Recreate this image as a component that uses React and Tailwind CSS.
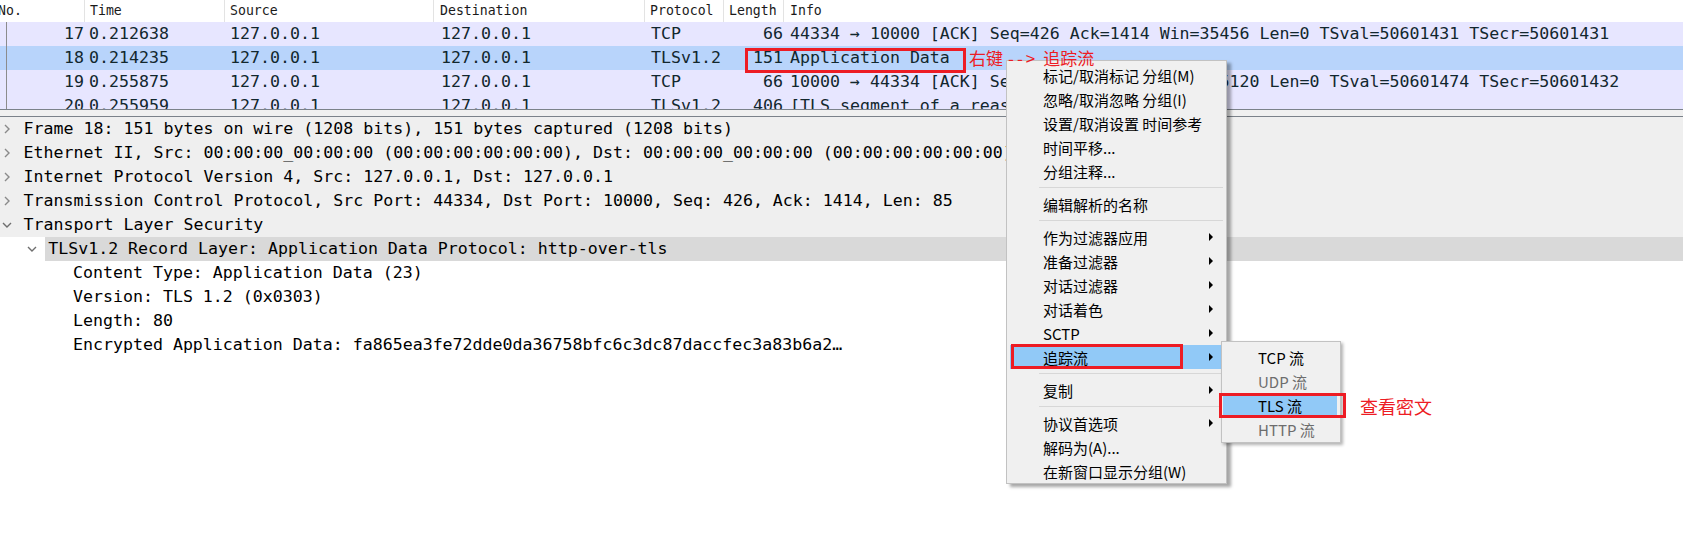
import React from "react";

const packets = [
  {
    no: 17,
    time: "0.212638",
    src: "127.0.0.1",
    dst: "127.0.0.1",
    proto: "TCP",
    len: 66,
    info: "44334 → 10000 [ACK] Seq=426 Ack=1414 Win=35456 Len=0 TSval=50601431 TSecr=50601431",
  },
  {
    no: 18,
    time: "0.214235",
    src: "127.0.0.1",
    dst: "127.0.0.1",
    proto: "TLSv1.2",
    len: 151,
    info: "Application Data",
    selected: true,
  },
  {
    no: 19,
    time: "0.255875",
    src: "127.0.0.1",
    dst: "127.0.0.1",
    proto: "TCP",
    len: 66,
    info: "10000 → 44334 [ACK] Seq=1414 Ack=511 Win=175120 Len=0 TSval=50601474 TSecr=50601432",
  },
  {
    no: 20,
    time: "0.255959",
    src: "127.0.0.1",
    dst: "127.0.0.1",
    proto: "TLSv1.2",
    len: 406,
    info: "[TLS segment of a reassembled PDU]",
  },
];

const tree = [
  { lvl: 0, icon: "right", gray: true, text: "Frame 18: 151 bytes on wire (1208 bits), 151 bytes captured (1208 bits)" },
  { lvl: 0, icon: "right", gray: true, text: "Ethernet II, Src: 00:00:00_00:00:00 (00:00:00:00:00:00), Dst: 00:00:00_00:00:00 (00:00:00:00:00:00)" },
  { lvl: 0, icon: "right", gray: true, text: "Internet Protocol Version 4, Src: 127.0.0.1, Dst: 127.0.0.1" },
  { lvl: 0, icon: "right", gray: true, text: "Transmission Control Protocol, Src Port: 44334, Dst Port: 10000, Seq: 426, Ack: 1414, Len: 85" },
  { lvl: 0, icon: "down", gray: true, text: "Transport Layer Security" },
  { lvl: 1, icon: "down", selected: true, text: "TLSv1.2 Record Layer: Application Data Protocol: http-over-tls" },
  { lvl: 2, text: "Content Type: Application Data (23)" },
  { lvl: 2, text: "Version: TLS 1.2 (0x0303)" },
  { lvl: 2, text: "Length: 80" },
  { lvl: 2, text: "Encrypted Application Data: fa865ea3fe72dde0da36758bfc6c3dc87daccfec3a83b6a2…" },
];

const indent = ["w-0", "w-[24.6px]", "w-[49.4px]"];

const menu = [
  { label: "标记/取消标记 分组(M)" },
  { label: "忽略/取消忽略 分组(I)" },
  { label: "设置/取消设置 时间参考" },
  { label: "时间平移..." },
  { label: "分组注释..." },
  "sep",
  { label: "编辑解析的名称" },
  "sep",
  { label: "作为过滤器应用", sub: true },
  { label: "准备过滤器", sub: true },
  { label: "对话过滤器", sub: true },
  { label: "对话着色", sub: true },
  { label: "SCTP", sub: true },
  { label: "追踪流", sub: true, active: true },
  "sep",
  { label: "复制", sub: true },
  "sep",
  { label: "协议首选项", sub: true },
  { label: "解码为(A)..." },
  { label: "在新窗口显示分组(W)" },
];

const followMenu = [
  { label: "TCP 流" },
  { label: "UDP 流", disabled: true },
  { label: "TLS 流", active: true },
  { label: "HTTP 流", disabled: true },
];

const Chevron = ({ dir }) =>
  dir === "right" ? (
    <svg width="8" height="12" viewBox="0 0 8 12" className="ml-[3px]">
      <polyline points="2,2 6,6 2,10" fill="none" stroke="#8a8a8a" strokeWidth="1.4" />
    </svg>
  ) : (
    <svg width="12" height="8" viewBox="0 0 12 8" className="ml-[1px]">
      <polyline points="2,2 6,6 10,2" fill="none" stroke="#6e6e6e" strokeWidth="1.4" />
    </svg>
  );

const SubArrow = () => (
  <svg width="4" height="8" viewBox="0 0 4 8">
    <polygon points="0,0 4,4 0,8" fill="#000" />
  </svg>
);

export default function App() {
  return (
    <div className="relative w-[1683px] h-[538px] overflow-hidden bg-white text-black">
      {/* packet list */}
      <div className="relative h-[109px] overflow-hidden font-['DejaVu_Sans_Mono',monospace]">
        <div className="flex h-[22px] items-center bg-white text-[13.2px] text-[#1a1a1a] whitespace-nowrap">
          <div className="w-[87px] h-full flex items-center border-r border-[#e3e3e3] -ml-[2px] pl-0">No.</div>
          <div className="w-[140px] h-full flex items-center border-r border-[#e3e3e3] pl-[5px]">Time</div>
          <div className="w-[209px] h-full flex items-center border-r border-[#e3e3e3] pl-[5px]">Source</div>
          <div className="w-[211px] h-full flex items-center border-r border-[#e3e3e3] pl-[6px]">Destination</div>
          <div className="w-[79px] h-full flex items-center border-r border-[#e3e3e3] pl-[5px]">Protocol</div>
          <div className="w-[60px] h-full flex items-center border-r border-[#e3e3e3] pl-[5px]">Length</div>
          <div className="flex-1 h-full flex items-center pl-[6px]">Info</div>
        </div>
        {packets.map((p) => (
          <div
            key={p.no}
            className={`flex h-[24px] items-center whitespace-nowrap text-[16.6px] text-[#12272e] ${
              p.selected ? "bg-[#b8d4fb]" : "bg-[#e7e6ff]"
            }`}
          >
            <div className="w-[87px] text-right pr-[3px]">{p.no}</div>
            <div className="w-[140px] pl-[2px]">{p.time}</div>
            <div className="w-[209px] pl-[3px]">{p.src}</div>
            <div className="w-[211px] pl-[5px]">{p.dst}</div>
            <div className="w-[79px] pl-[4px]">{p.proto}</div>
            <div className="w-[60px] text-right pr-[3px]">{p.len}</div>
            <div className="flex-1 pl-[4px] overflow-hidden">{p.info}</div>
          </div>
        ))}
        <div className="absolute left-[6px] top-[22px] w-px h-[87px] bg-[#8c8c8c]" />
      </div>
      <div className="h-px bg-[#7b828a]" />
      <div className="h-[6px] bg-[#f0f0f0]" />
      <div className="h-px bg-[#7b828a]" />

      {/* packet details */}
      <div className="font-['DejaVu_Sans_Mono',monospace] text-[16.6px]">
        {tree.map((r, i) => (
          <div
            key={i}
            className={`flex h-[24px] items-center whitespace-nowrap overflow-hidden ${r.gray ? "bg-[#efefef]" : "bg-white"}`}
          >
            <div className={`${indent[r.lvl]} shrink-0`} />
            <div className="w-[20px] shrink-0 flex items-center">{r.icon && <Chevron dir={r.icon} />}</div>
            <div className={`flex-1 h-full flex items-center pl-[3.6px] ${r.selected ? "bg-[#d9d9d9]" : ""}`}>
              {r.text}
            </div>
          </div>
        ))}
      </div>

      {/* context menu */}
      <div className="absolute left-[1006px] top-[60px] w-[221px] border border-[#c2c2c2] bg-[#f0f0f0] pt-[2px] shadow-[4px_3px_3px_rgba(0,0,0,0.35)] font-['Noto_Sans_CJK_SC',sans-serif] text-[15px] text-black">
        {menu.map((m, i) =>
          m === "sep" ? (
            <div key={i} className="h-[9px] flex items-center">
              <div className="ml-[32px] mr-[3px] flex-1 h-px bg-[#d7d7d7]" />
            </div>
          ) : (
            <div
              key={i}
              className={`flex h-[24px] items-center justify-between ml-[3px] mr-[5px] pl-[33px] pr-[8px] leading-none ${
                m.active ? "bg-[#91c9f7]" : ""
              }`}
            >
              <span>{m.label}</span>
              {m.sub && <SubArrow />}
            </div>
          )
        )}
      </div>

      {/* follow stream submenu */}
      <div className="absolute left-[1221px] top-[341px] w-[120px] border border-[#c2c2c2] bg-[#f0f0f0] pt-[3px] pb-[1px] shadow-[2px_2px_3px_rgba(0,0,0,0.3)] font-['Noto_Sans_CJK_SC',sans-serif] text-[15px]">
        {followMenu.map((m) => (
          <div
            key={m.label}
            className={`flex h-[24px] items-center ml-[1px] mr-[3px] pl-[35px] leading-none ${
              m.active ? "bg-[#91c9f7]" : ""
            } ${m.disabled ? "text-[#6d6d6d]" : "text-black"}`}
          >
            {m.label}
          </div>
        ))}
      </div>

      {/* annotations */}
      <div className="absolute left-[745px] top-[48px] w-[221px] h-[25px] border-[3px] border-[#ed1c24]" />
      <div className="absolute left-[969px] top-[45px] h-[24px] flex items-center whitespace-nowrap font-['Noto_Sans_CJK_SC',sans-serif] text-[17px] leading-none text-[#ed1c24]">
        <span>右键</span>
        <span className="mx-[5px] tracking-[3px]">--&gt;</span>
        <span>追踪流</span>
      </div>
      <div className="absolute left-[1011px] top-[344px] w-[172px] h-[25px] border-[3px] border-[#ed1c24]" />
      <div className="absolute left-[1219px] top-[393px] w-[127px] h-[25px] border-[3px] border-[#ed1c24]" />
      <div className="absolute left-[1360px] top-[394px] h-[24px] flex items-center whitespace-nowrap font-['Noto_Sans_CJK_SC',sans-serif] text-[18px] leading-none text-[#ed1c24]">
        查看密文
      </div>
    </div>
  );
}
